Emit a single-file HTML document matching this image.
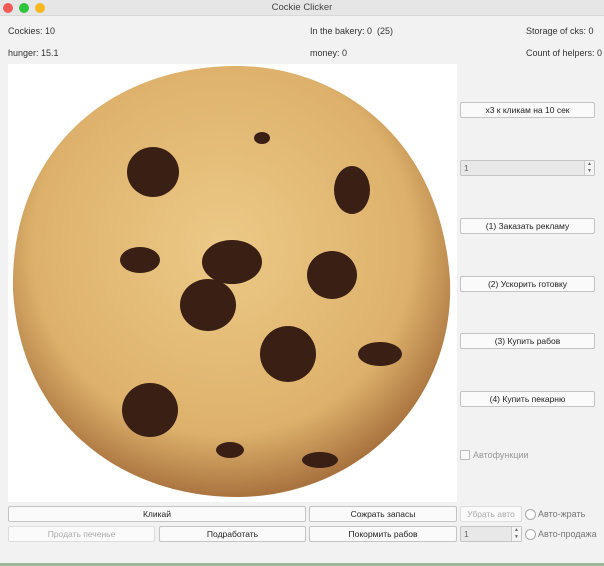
<html><head><style>
body{margin:0;width:604px;height:566px;background:#9fb59a;font-family:"Liberation Sans",sans-serif;font-size:9px;color:#333;overflow:hidden;position:relative}
.win{position:absolute;left:0;top:0;width:604px;height:563px;background:#f2f2f2}
.tb{position:absolute;left:0;top:0;width:604px;height:15px;background:#e6e6e6;border-bottom:1px solid #d8d8d8;text-align:center;line-height:15px;font-size:9.5px;color:#444}
.d{position:absolute;top:3px;width:10px;height:10px;border-radius:50%}
.t{position:absolute;white-space:nowrap}
.b{position:absolute;background:#fafafa;border:1px solid #c4c4c4;border-radius:2px;text-align:center;font-size:8.5px;line-height:14px;color:#222;box-sizing:border-box;height:16px}
.dis{color:#aaa;border-color:#ddd}
.sp{position:absolute;background:#e8e8e8;border:1px solid #c4c4c4;border-radius:2px;box-sizing:border-box;height:16px;font-size:8.5px;line-height:14px;padding-left:3px;color:#666}
.sp i{position:absolute;right:0;top:0;width:9px;height:14px;border-left:1px solid #ccc;background:#f4f4f4;font-style:normal;font-size:5px;line-height:7px;text-align:center}
.r{position:absolute;width:9px;height:9px;border:1px solid #aaa;border-radius:50%;background:#fff}
</style></head><body>
<div class="win">
<div class="tb">Cockie Clicker</div>
<div class="d" style="left:3px;background:#f25a55"></div>
<div class="d" style="left:19px;background:#2bc63b"></div>
<div class="d" style="left:35px;background:#f8b71e"></div>
<div class="t" style="left:8px;top:26px">Cockies: 10</div>
<div class="t" style="left:310px;top:26px">In the bakery: 0&nbsp; (25)</div>
<div class="t" style="left:526px;top:26px">Storage of cks: 0</div>
<div class="t" style="left:8px;top:48px">hunger: 15.1</div>
<div class="t" style="left:310px;top:48px">money: 0</div>
<div class="t" style="left:526px;top:48px">Count of helpers: 0</div>
<svg style="position:absolute;left:8px;top:64px" width="449" height="438" viewBox="8 64 449 438">
<defs><radialGradient id="g" cx="48%" cy="42%" r="58%"><stop offset="0" stop-color="#ecc987"/><stop offset="0.75" stop-color="#ddb16b"/><stop offset="1" stop-color="#a9733f"/></radialGradient></defs>
<rect x="8" y="64" width="449" height="438" fill="#fff"/>
<path d="M232 66 C330 64 440 130 450 280 C455 400 360 495 240 497 C120 498 20 420 13 290 C10 150 110 68 232 66Z" fill="url(#g)"/>
<g fill="#3a1f14">
<ellipse cx="153" cy="172" rx="26" ry="25"/>
<ellipse cx="352" cy="190" rx="18" ry="24"/>
<ellipse cx="140" cy="260" rx="20" ry="13"/>
<ellipse cx="232" cy="262" rx="30" ry="22"/>
<ellipse cx="208" cy="305" rx="28" ry="26"/>
<ellipse cx="332" cy="275" rx="25" ry="24"/>
<ellipse cx="288" cy="354" rx="28" ry="28"/>
<ellipse cx="150" cy="410" rx="28" ry="27"/>
<ellipse cx="380" cy="354" rx="22" ry="12"/>
<ellipse cx="262" cy="138" rx="8" ry="6"/>
<ellipse cx="320" cy="460" rx="18" ry="8"/>
<ellipse cx="230" cy="450" rx="14" ry="8"/>
</g>
</svg>
<div class="b" style="left:460px;top:102px;width:135px">x3 к кликам на 10 сек</div>
<div class="sp" style="left:460px;top:160px;width:135px">1<i>▲<br>▼</i></div>
<div class="b" style="left:460px;top:218px;width:135px">(1) Заказать рекламу</div>
<div class="b" style="left:460px;top:276px;width:135px">(2) Ускорить готовку</div>
<div class="b" style="left:460px;top:333px;width:135px">(3) Купить рабов</div>
<div class="b" style="left:460px;top:391px;width:135px">(4) Купить пекарню</div>
<div style="position:absolute;left:460px;top:450px;width:8px;height:8px;border:1px solid #bbb;background:#fafafa;border-radius:1px"></div>
<div class="t" style="left:473px;top:450px;color:#999">Автофункции</div>
<div class="b" style="left:8px;top:506px;width:298px">Кликай</div>
<div class="b" style="left:309px;top:506px;width:148px">Сожрать запасы</div>
<div class="b dis" style="left:460px;top:506px;width:62px">Убрать авто</div>
<div class="r" style="left:525px;top:509px"></div>
<div class="t" style="left:538px;top:509px;color:#777">Авто-жрать</div>
<div class="b dis" style="left:8px;top:526px;width:147px">Продать печенье</div>
<div class="b" style="left:159px;top:526px;width:147px">Подработать</div>
<div class="b" style="left:309px;top:526px;width:148px">Покормить рабов</div>
<div class="sp" style="left:460px;top:526px;width:62px">1<i>▲<br>▼</i></div>
<div class="r" style="left:525px;top:529px"></div>
<div class="t" style="left:538px;top:529px;color:#777">Авто-продажа</div>
</div>
</body></html>
